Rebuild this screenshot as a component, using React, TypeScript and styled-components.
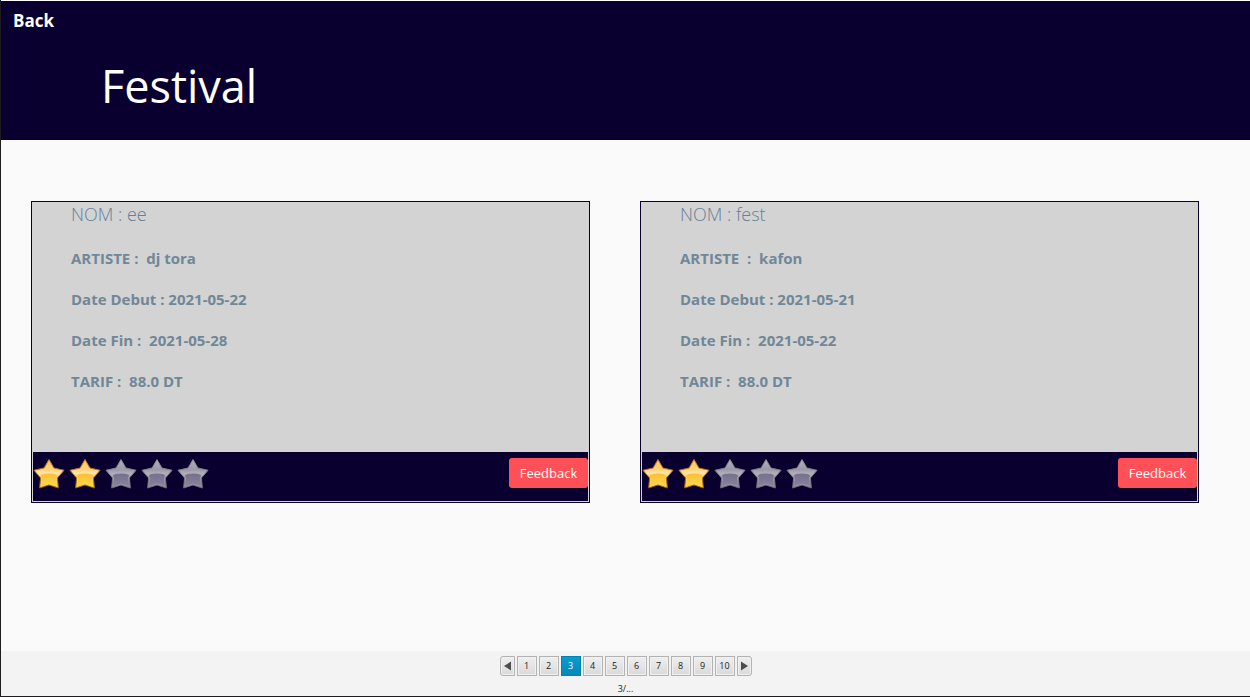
import React from "react";
import styled, { createGlobalStyle } from "styled-components";

const GlobalStyle = createGlobalStyle`
  *, *::before, *::after { box-sizing: border-box; }
  body {
    margin: 0;
    background: #fafafa;
    font-family: "Open Sans", "Noto Sans", sans-serif;
  }
`;

const Page = styled.div`
  min-height: 100vh;
  display: flex;
  flex-direction: column;
  background: #fafafa;
  border: solid #1e1c1e;
  border-width: 0 0 1px 1px;
`;

const Header = styled.header`
  height: 140px;
  background: #090030;
  border-top: 1px solid #fff;
  color: #fff;
`;

const BackLink = styled.a`
  display: block;
  width: max-content;
  padding: 8px 12px 0;
  font: 700 17px/24px "Open Sans", "Noto Sans", sans-serif;
  color: #fff;
  text-decoration: none;
`;

const Title = styled.h1`
  margin: 20px 0 0 100px;
  font-size: 45px;
  line-height: 66px;
  font-weight: 400;
`;

const Cards = styled.main`
  flex: 1;
  display: grid;
  grid-template-columns: 1fr 1fr;
  align-items: start;
  gap: 50px;
  padding: 61px 51px 61px 30px;
`;

const Card = styled.article`
  display: flex;
  flex-direction: column;
  padding: 1px;
  background: #d3d3d3;
  border: 1px solid #090030;
`;

const Details = styled.div`
  height: 249px;
  padding-left: 38px;
  color: #708798;
  white-space: pre;
`;

const Name = styled.h2`
  margin: 0 0 20px;
  font-size: 18px;
  line-height: 23px;
  font-weight: 300;
  color: #668095;
`;

const Detail = styled.p`
  margin: 0 0 17px;
  font-size: 15px;
  line-height: 24px;
  font-weight: 700;
`;

const CardFooter = styled.footer`
  height: 49px;
  display: flex;
  align-items: flex-start;
  justify-content: space-between;
  padding-top: 6px;
  background: #090030;
`;

const Stars = styled.div`
  display: flex;
  gap: 4px;
`;

const StarSvg = styled.svg`
  display: block;
  width: 32px;
  height: 32px;
`;

const FeedbackButton = styled.button`
  width: 79px;
  height: 30px;
  padding: 0;
  border: 0;
  border-radius: 3px;
  background: #ff5058;
  color: #fff;
  font: 400 13px/28px "Open Sans", "Noto Sans", sans-serif;
`;

const Pager = styled.nav`
  height: 45px;
  padding-top: 5px;
  background: #f3f3f3;
  color: #222;
  font-size: 9px;
  text-align: center;
`;

const PagerButtons = styled.div`
  display: flex;
  justify-content: center;
  gap: 2px;
`;

const PagerButton = styled.button<{ $active?: boolean; $arrow?: "left" | "right" }>`
  width: ${(p) => (p.$arrow ? 15 : 20)}px;
  height: 20px;
  display: flex;
  align-items: center;
  justify-content: center;
  padding: 0;
  border: 1px solid ${(p) => (p.$active ? "#0380ab" : "#b2b2b2")};
  border-radius: ${(p) =>
    p.$arrow === "left" ? "3px 0 0 3px" : p.$arrow === "right" ? "0 3px 3px 0" : "0"};
  background: ${(p) =>
    p.$active ? "linear-gradient(#099bd0, #0689b8)" : "linear-gradient(#efefef, #d9d9d9)"};
  box-shadow: ${(p) => (p.$active ? "none" : "inset 0 0 0 1px #f1f1f1")};
  color: ${(p) => (p.$active ? "#fff" : "#222")};
  font: 400 9px/18px "Open Sans", "Noto Sans", sans-serif;
`;

const PageInfo = styled.div`
  margin-top: 7px;
  line-height: 12px;
`;

const starPath =
  "M16 1.6 L20.9 10 L31 12.3 L24.4 20 L25.4 30 L16 27 L6.6 30 L7.6 20 L1 12.3 L11.1 10 Z";

function StarDefs() {
  return (
    <svg width="0" height="0" style={{ position: "absolute" }} aria-hidden="true">
      <defs>
        <linearGradient id="gold" x1="0" y1="0" x2="0" y2="1">
          <stop offset="0" stopColor="#ffc65a" />
          <stop offset="0.35" stopColor="#ffd27a" />
          <stop offset="0.48" stopColor="#ffe6ad" />
          <stop offset="0.6" stopColor="#ffcf50" />
          <stop offset="1" stopColor="#ffd84c" />
        </linearGradient>
        <linearGradient id="goldEdge" x1="0" y1="0" x2="0" y2="1">
          <stop offset="0" stopColor="#c9822a" />
          <stop offset="1" stopColor="#9a5a10" />
        </linearGradient>
        <linearGradient id="goldLower" x1="0" y1="0" x2="0" y2="1">
          <stop offset="0" stopColor="#fbbf3a" />
          <stop offset="1" stopColor="#ffdb4c" />
        </linearGradient>
        <linearGradient id="gray" x1="0" y1="0" x2="0" y2="1">
          <stop offset="0" stopColor="#b4b2ba" />
          <stop offset="0.35" stopColor="#9b99a8" />
          <stop offset="0.48" stopColor="#b0aebb" />
          <stop offset="1" stopColor="#8f8ca3" />
        </linearGradient>
        <linearGradient id="grayEdge" x1="0" y1="0" x2="0" y2="1">
          <stop offset="0" stopColor="#8f8f8d" />
          <stop offset="1" stopColor="#6d6d6c" />
        </linearGradient>
        <linearGradient id="grayLower" x1="0" y1="0" x2="0" y2="1">
          <stop offset="0" stopColor="#75718c" />
          <stop offset="1" stopColor="#8985a0" />
        </linearGradient>
        <clipPath id="starInside">
          <path d="M16 4.2 L20.2 11.2 L28.6 13.2 L23.1 19.6 L23.9 28 L16 25.6 L8.1 28 L8.9 19.6 L3.4 13.2 L11.8 11.2 Z" />
        </clipPath>
      </defs>
    </svg>
  );
}

function Star({ filled }: { filled: boolean }) {
  const tone = filled ? "gold" : "gray";
  return (
    <StarSvg viewBox="0 0 32 32" aria-hidden="true">
      <path
        d={starPath}
        fill={`url(#${tone})`}
        stroke={`url(#${tone}Edge)`}
        strokeWidth="1"
        strokeLinejoin="round"
      />
      <path
        d="M8 17.5 Q9 15.5 16 15.5 Q23 15.5 24 17.5 V30 H8 Z"
        fill={`url(#${tone}Lower)`}
        clipPath="url(#starInside)"
      />
    </StarSvg>
  );
}

const festivals = [
  {
    name: "NOM : ee",
    details: ["ARTISTE :  dj tora", "Date Debut : 2021-05-22", "Date Fin :  2021-05-28", "TARIF :  88.0 DT"],
    rating: 2,
  },
  {
    name: "NOM : fest",
    details: ["ARTISTE  :  kafon", "Date Debut : 2021-05-21", "Date Fin :  2021-05-22", "TARIF :  88.0 DT"],
    rating: 2,
  },
];

const pages = [1, 2, 3, 4, 5, 6, 7, 8, 9, 10];

export default function App() {
  return (
    <>
      <GlobalStyle />
      <StarDefs />
      <Page>
        <Header>
          <BackLink href="#">Back</BackLink>
          <Title>Festival</Title>
        </Header>
        <Cards>
          {festivals.map((f) => (
            <Card key={f.name}>
              <Details>
                <Name>{f.name}</Name>
                {f.details.map((d) => (
                  <Detail key={d}>{d}</Detail>
                ))}
              </Details>
              <CardFooter>
                <Stars role="img" aria-label={`${f.rating} / 5`}>
                  {[1, 2, 3, 4, 5].map((n) => (
                    <Star key={n} filled={n <= f.rating} />
                  ))}
                </Stars>
                <FeedbackButton type="button">Feedback</FeedbackButton>
              </CardFooter>
            </Card>
          ))}
        </Cards>
        <Pager>
          <PagerButtons>
            <PagerButton type="button" $arrow="left" aria-label="Previous">
              <svg width="7" height="10" viewBox="0 0 7 10">
                <path d="M7 0.5 V9.5 L0 5 Z" fill="#4c4c4c" />
              </svg>
            </PagerButton>
            {pages.map((n) => (
              <PagerButton key={n} type="button" $active={n === 3}>
                {n}
              </PagerButton>
            ))}
            <PagerButton type="button" $arrow="right" aria-label="Next">
              <svg width="7" height="10" viewBox="0 0 7 10">
                <path d="M0 0.5 V9.5 L7 5 Z" fill="#4c4c4c" />
              </svg>
            </PagerButton>
          </PagerButtons>
          <PageInfo>3/...</PageInfo>
        </Pager>
      </Page>
    </>
  );
}
